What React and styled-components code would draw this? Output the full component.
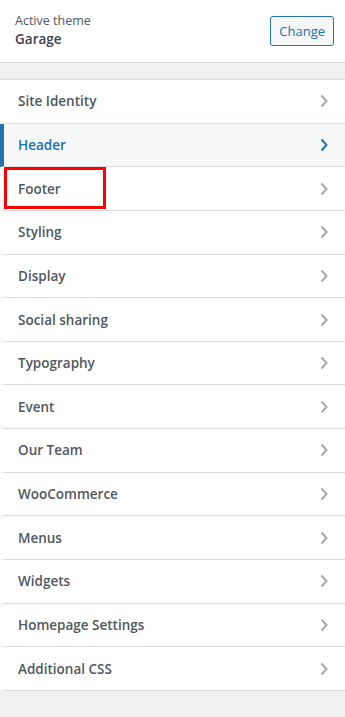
import React from "react";
import styled, { createGlobalStyle } from "styled-components";

const Global = createGlobalStyle`
  html, body {
    margin: 0;
    padding: 0;
    background: #f0f0f1;
    font-family: "Open Sans", "Noto Sans", sans-serif;
  }
`;

const Panel = styled.div`
  width: 345px;
  min-height: 717px;
  background: #f0f0f1;
`;

const ThemeBar = styled.div`
  height: 63px;
  box-sizing: border-box;
  background: #fff;
  border-bottom: 1px solid #dcdcde;
  display: flex;
  align-items: center;
  justify-content: space-between;
  padding: 0 11px 1px 15px;
`;

const ThemeInfo = styled.div`
  display: flex;
  flex-direction: column;
`;

const Small = styled.span`
  font-size: 12.5px;
  color: #50575e;
  line-height: 18px;
`;

const ThemeName = styled.span`
  font-size: 13.5px;
  font-weight: 600;
  color: #3c434a;
  line-height: 19px;
`;

const ChangeButton = styled.button`
  font-family: inherit;
  font-size: 13px;
  color: #2271b1;
  background: #f6f7f7;
  border: 1px solid #2271b1;
  border-radius: 3px;
  height: 30px;
  padding: 0 8px;
  margin-top: 1px;
`;

const Gap = styled.div`
  height: 16px;
`;

const List = styled.ul`
  list-style: none;
  margin: 0;
  padding: 0;
  background: #fff;
  border-top: 1px solid #dcdcde;
`;

const Row = styled.li`
  position: relative;
  height: 42.65px;
  border-bottom: 1px solid #dcdcde;
  border-left: 4px solid ${p => (p.$active ? "#2271b1" : "transparent")};
  background: ${p => (p.$active ? "#f6f7f7" : "#fff")};
  display: flex;
  align-items: center;
  justify-content: space-between;
  padding: 0 16px 0 14px;
  font-size: 13.5px;
  font-weight: 600;
  color: ${p => (p.$active ? "#2271b1" : "#50575e")};
`;

const Highlight = styled.div`
  position: absolute;
  left: 0;
  top: 0;
  width: 102px;
  height: 42px;
  border: 3px solid #f00;
  box-sizing: border-box;
`;

const Chevron = ({ active }) => (
  <svg width="10" height="14" viewBox="0 0 10 14">
    <path
      d="M2.5 1.5 L7.5 7 L2.5 12.5"
      fill="none"
      stroke={active ? "#2271b1" : "#a7aaad"}
      strokeWidth="2"
    />
  </svg>
);

const items = [
  "Site Identity",
  "Header",
  "Footer",
  "Styling",
  "Display",
  "Social sharing",
  "Typography",
  "Event",
  "Our Team",
  "WooCommerce",
  "Menus",
  "Widgets",
  "Homepage Settings",
  "Additional CSS",
];

export default function App() {
  return (
    <Panel>
      <Global />
      <ThemeBar>
        <ThemeInfo>
          <Small>Active theme</Small>
          <ThemeName>Garage</ThemeName>
        </ThemeInfo>
        <ChangeButton>Change</ChangeButton>
      </ThemeBar>
      <Gap />
      <List>
        {items.map(name => (
          <Row key={name} $active={name === "Header"}>
            {name === "Footer" && <Highlight />}
            <span>{name}</span>
            <Chevron active={name === "Header"} />
          </Row>
        ))}
      </List>
    </Panel>
  );
}
